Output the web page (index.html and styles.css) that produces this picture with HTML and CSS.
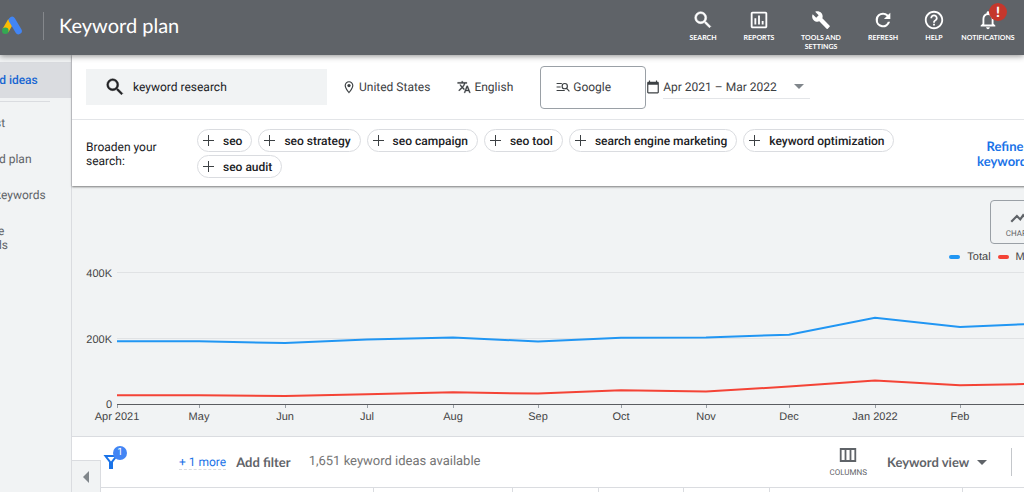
FILE: index.html
```html
<!DOCTYPE html>
<html lang="en">

<head>
    <meta charset="UTF-8">
    <meta name="viewport" content="width=device-width, initial-scale=1.0">
    <title>Keyword plan</title>

    <link rel="stylesheet" href="styles.css">
</head>

<body>

    <header class="topbar">
        <svg class="logo" width="24" height="20" viewBox="0 0 24 20">
            <path d="M5.5 14.5L11 5" stroke="#fbbc04" stroke-width="6.6" />
            <path d="M12 4l6.500 11" stroke="#4285f4" stroke-width="6.6" stroke-linecap="round" />
            <circle cx="5.3" cy="14.8" r="3.3" fill="#34a853" />
        </svg>
        <h1 class="title">Keyword plan</h1>

        <nav class="tools">
            <button class="tool">
                <svg width="22" height="22" viewBox="0 0 24 24"><path stroke="currentColor" stroke-width=".6" d="M15.5 14h-.79l-.28-.27A6.471 6.471 0 0 0 16 9.5 6.5 6.5 0 1 0 9.5 16c1.61 0 3.09-.59 4.23-1.57l.27.28v.79l5 4.99L20.49 19l-4.99-5zm-6 0C7.01 14 5 11.99 5 9.5S7.01 5 9.5 5 14 7.01 14 9.5 11.99 14 9.5 14z" /></svg>
                <span>SEARCH</span>
            </button>
            <button class="tool">
                <svg width="22" height="22" viewBox="0 0 24 24"><path d="M9 17H7v-7h2v7zm4 0h-2V7h2v10zm4 0h-2v-4h2v4zm2 2H5V5h14v14zm0-16H5c-1.100 0-2 .9-2 2v14c0 1.100.9 2 2 2h14c1.100 0 2-.9 2-2V5c0-1.100-.9-2-2-2z" /></svg>
                <span>REPORTS</span>
            </button>
            <button class="tool">
                <svg width="22" height="22" viewBox="0 0 24 24"><path transform="translate(1.500 1.500) scale(.88)" d="M22.700 19l-9.100-9.100c.9-2.300.4-5-1.500-6.900-2-2-5-2.400-7.400-1.300L9 6 6 9 1.600 4.700C.4 7.100.9 10.100 2.900 12.100c1.900 1.900 4.600 2.400 6.900 1.500l9.100 9.100c.4.4 1 .4 1.400 0l2.300-2.300c.5-.4.5-1.100.1-1.400z" /></svg>
                <span>TOOLS AND SETTINGS</span>
            </button>
            <button class="tool">
                <svg width="22" height="22" viewBox="0 0 24 24"><path d="M17.650 6.350A7.958 7.958 0 0 0 12 4a8 8 0 1 0 7.730 10h-2.480A5.600 5.600 0 1 1 12 6.400c1.500 0 2.900.6 4 1.600L13 11h7V4l-2.350 2.350z" /></svg>
                <span>REFRESH</span>
            </button>
            <button class="tool">
                <svg width="22" height="22" viewBox="0 0 24 24"><path d="M11 18h2v-2h-2v2zm1-16C6.480 2 2 6.480 2 12s4.480 10 10 10 10-4.480 10-10S17.520 2 12 2zm0 18c-4.410 0-8-3.590-8-8s3.590-8 8-8 8 3.590 8 8-3.590 8-8 8zm0-14c-2.210 0-4 1.790-4 4h2c0-1.100.9-2 2-2s2 .9 2 2c0 2-3 1.750-3 5h2c0-2.250 3-2.500 3-5 0-2.210-1.790-4-4-4z" /></svg>
                <span>HELP</span>
            </button>
            <button class="tool">
                <svg width="22" height="22" viewBox="0 0 24 24"><path d="M12 22c1.100 0 2-.9 2-2h-4c0 1.100.9 2 2 2zm6-6v-5c0-3.070-1.630-5.640-4.500-6.320V4c0-.83-.67-1.500-1.500-1.500s-1.500.67-1.500 1.500v.68C7.640 5.360 6 7.920 6 11v5l-2 2v1h16v-1l-2-2zm-2 1H8v-6c0-2.480 1.510-4.500 4-4.500s4 2.020 4 4.500v6z" /></svg>
                <span>NOTIFICATIONS</span>
                <b class="alert">!</b>
            </button>
        </nav>
    </header>

    <div class="page">
        <aside class="sidebar">
            <ul class="menu">
                <li class="active"><a href="#">rd ideas</a></li>
                <li class="line"></li>
                <li><a href="#">st</a></li>
                <li><a href="#">rd plan</a></li>
                <li><a href="#">keywords</a></li>
                <li><a href="#">&nbsp;e<br>ds</a></li>
            </ul>
        </aside>

        <main class="content">
            <section class="panel">
                <div class="filters">
                    <label class="search">
                        <svg width="22" height="22" viewBox="0 0 24 24"><path stroke="currentColor" stroke-width=".5" d="M15.5 14h-.79l-.28-.27A6.471 6.471 0 0 0 16 9.5 6.5 6.5 0 1 0 9.5 16c1.61 0 3.09-.59 4.23-1.57l.27.28v.79l5 4.99L20.49 19l-4.99-5zm-6 0C7.01 14 5 11.99 5 9.5S7.01 5 9.5 5 14 7.01 14 9.5 11.99 14 9.5 14z" /></svg>
                        <input type="text" value="keyword research" aria-label="Keywords">
                    </label>
                    <button class="filter place">
                        <svg width="14" height="14" viewBox="0 0 24 24"><path d="M12 2a7.500 7.500 0 0 0-7.500 7.500C4.500 15 12 23 12 23s7.500-8 7.500-13.500A7.500 7.500 0 0 0 12 2zm0 2c3 0 5.500 2.500 5.500 5.500 0 3-3 7.500-5.500 10.500-2.500-3-5.500-7.500-5.500-10.500C6.500 6.500 9 4 12 4z" /><circle cx="12" cy="9.500" r="2.800" /></svg>
                        United States
                    </button>
                    <button class="filter language">
                        <svg width="14" height="14" viewBox="0 0 24 24"><path d="M12.870 15.070l-2.540-2.510.03-.03A17.520 17.520 0 0 0 14.070 6H17V4h-7V2H8v2H1v2h11.170C11.500 7.920 10.440 9.750 9 11.350 8.070 10.320 7.300 9.190 6.690 8h-2c.73 1.630 1.730 3.170 2.980 4.560l-5.090 5.020L4 19l5-5 3.110 3.110.76-2.040zM18.500 10h-2L12 22h2l1.120-3h4.750L21 22h2l-4.500-12zm-2.620 7l1.620-4.330L19.120 17h-3.240z" stroke="currentColor" stroke-width=".5" /></svg>
                        English
                    </button>
                    <button class="filter network">
                        <svg width="14" height="14" viewBox="0 0 24 24"><path d="M1 6h9M1 12h7M1 18h14M18 14l5 5.500M19.500 10.500a4.500 4.500 0 1 1-9 0 4.500 4.500 0 1 1 9 0z" fill="none" stroke="currentColor" stroke-width="2" /></svg>
                        Google
                    </button>
                    <div class="filter date">
                        <svg width="14" height="14" viewBox="0 0 24 24"><path d="M20 3h-1V1h-2v2H7V1H5v2H4c-1.100 0-2 .9-2 2v16c0 1.100.9 2 2 2h16c1.100 0 2-.9 2-2V5c0-1.100-.9-2-2-2zm0 18H4V8h16v13z" /></svg>
                        <span class="dropdown">
                            <select aria-label="Date range">
                                <option>Apr 2021 – Mar 2022</option>
                            </select>
                        </span>
                    </div>
                </div>

                <div class="broaden">
                    <p>Broaden your search:</p>
                    <div class="chips">
                        <button class="chip">seo</button>
                        <button class="chip">seo strategy</button>
                        <button class="chip">seo campaign</button>
                        <button class="chip">seo tool</button>
                        <button class="chip">search engine marketing</button>
                        <button class="chip">keyword optimization</button>
                        <button class="chip">seo audit</button>
                    </div>
                    <a class="refine" href="#">Refine keywords</a>
                </div>
            </section>

            <section class="chart">
                <button class="chart-type">
                    <svg width="20" height="20" viewBox="0 0 24 24"><path d="M2.700 17.700l6.800-6.800 4 4 3.500-5 3 3 3-4" fill="none" stroke="currentColor" stroke-width="2.600" /></svg>
                    <span>CHART</span>
                </button>
                <div class="legend">
                    <span class="total">Total</span>
                    <span class="mobile">Mobile</span>
                </div>
                <svg class="plot" viewBox="0 0 992 173">
                    <path class="grid" d="M45 9.500h947M45 75.500h947" />
                    <path class="axis" d="M45 141.500h947" />
                    <path class="ticks" d="M45.500 142v3M127.500 142v3M213.500 142v3M295.500 142v3M381.500 142v3M466.500 142v3M549.500 142v3M634.500 142v3M717.500 142v3M803.500 142v3M888.500 142v3M966.500 142v3" />
                    <polyline class="line-total" points="45,78.300 127,78.300 213,80 295,76.500 381,74.500 466,78.500 549,74.700 634,74.400 717,71.700 803,54.700 888,64 966,60.500 992,60" />
                    <polyline class="line-mobile" points="45,132.300 127,132.300 213,133 295,131.200 381,129.300 466,130.600 549,127.300 634,128.600 717,123.500 803,117.400 888,122.300 966,120.800 992,120.500" />
                    <g class="values">
                        <text x="40" y="14">400K</text>
                        <text x="40" y="80">200K</text>
                        <text x="40" y="145">0</text>
                    </g>
                    <g class="months">
                        <text x="45" y="157">Apr 2021</text>
                        <text x="127" y="157">May</text>
                        <text x="213" y="157">Jun</text>
                        <text x="295" y="157">Jul</text>
                        <text x="381" y="157">Aug</text>
                        <text x="466" y="157">Sep</text>
                        <text x="549" y="157">Oct</text>
                        <text x="634" y="157">Nov</text>
                        <text x="717" y="157">Dec</text>
                        <text x="803" y="157">Jan 2022</text>
                        <text x="888" y="157">Feb</text>
                    </g>
                </svg>
            </section>

            <section class="results">
                <div class="toolbar">
                    <button class="funnel" aria-label="Filters">
                        <svg width="16" height="16" viewBox="0 0 16 16"><path d="M2.500 2h11L9 7.800V14H7V7.800z" fill="none" stroke="currentColor" stroke-width="2" /></svg>
                        <span class="count">1</span>
                    </button>
                    <a class="more" href="#">+ 1 more</a>
                    <button class="add">Add filter</button>
                    <span class="available">1,651 keyword ideas available</span>
                    <button class="columns">
                        <svg width="18" height="14" viewBox="0 0 18 14"><path d="M1.700 1h14.600v12H1.700zM6.500 1v12M11.500 1v12" fill="none" stroke="currentColor" stroke-width="1.800" /></svg>
                        <span>COLUMNS</span>
                    </button>
                    <span class="dropdown view">
                        <select aria-label="View">
                            <option>Keyword view</option>
                        </select>
                    </span>
                </div>
                <div class="table-head">
                    <span></span><span></span><span></span><span></span><span></span><span></span>
                </div>
                <button class="collapse" aria-label="Collapse menu"></button>
            </section>
        </main>
    </div>

</body>

</html>
```

FILE: styles.css
```css
* {
    box-sizing: border-box;
}

body {
    margin: 0;
    height: 100vh;
    display: flex;
    flex-direction: column;
    overflow: hidden;
    font-family: Roboto, "Liberation Sans", sans-serif;
    font-size: 12px;
    line-height: 14px;
    text-rendering: geometricPrecision;
    color: #3c4043;
    background-color: #f1f3f4;
}

button,
input,
select {
    font: inherit;
    text-rendering: inherit;
    color: inherit;
    background: none;
    border: none;
    padding: 0;
    margin: 0;
}

svg {
    flex: none;
    fill: currentColor;
}

a {
    color: inherit;
    text-decoration: none;
}

/* top bar */

.topbar {
    position: relative;
    z-index: 2;
    flex: none;
    height: 55px;
    display: flex;
    align-items: center;
    padding: 0 5px 3px 0;
    color: white;
    background-color: #5f6368;
    box-shadow: 0 1px 6px rgba(0, 0, 0, 0.45);
}

.logo {
    fill: none;
}

.title {
    margin: 0 auto 0 19px;
    padding-left: 15px;
    border-left: 1px solid #85888c;
    font-family: Lato, sans-serif;
    font-size: 20px;
    font-weight: 400;
    line-height: 28px;
}

.tools {
    align-self: stretch;
    display: grid;
    grid-template-columns: 56px 56px 68px 56px 46px 62px;
    padding-top: 9px;
}

.tool {
    position: relative;
    display: flex;
    flex-direction: column;
    align-items: center;
    justify-content: flex-start;
    gap: 3px;
    padding: 0 4px;
    font-family: Lato, sans-serif;
    font-size: 7px;
    font-weight: 700;
    line-height: 9px;
}

.alert {
    position: absolute;
    top: -6px;
    right: 12px;
    width: 18px;
    border-radius: 50%;
    background-color: #c5372c;
    font-size: 14px;
    line-height: 18px;
    text-align: center;
}

/* side menu */

.page {
    flex: 1;
    display: flex;
    min-height: 0;
}

.sidebar {
    flex: none;
    width: 72px;
    border-right: 1px solid #dadce0;
    color: #5f6368;
}

.menu {
    list-style: none;
    margin: 0 0 0 -5px;
    padding: 7px 0 0;
}

.menu li {
    padding: 11px 0;
}

.menu .active {
    font-weight: 500;
    color: #1967d2;
    background-color: #dadce0;
}

.menu .line {
    width: 55px;
    margin: 3px 0;
    padding: 0;
    border-top: 1px solid #dadce0;
}

/* content runs past the right edge of the window */

.content {
    flex: 1;
    display: flex;
    flex-direction: column;
    min-width: 0;
    margin-right: -40px;
}

.panel {
    position: relative;
    background-color: white;
    box-shadow: 0 1px 2px rgba(0, 0, 0, 0.5);
}

.filters {
    display: flex;
    align-items: center;
    height: 65px;
    padding-left: 14px;
    border-bottom: 1px solid #e3e5e8;
}

.search {
    display: flex;
    align-items: center;
    gap: 7px;
    width: 241px;
    height: 36px;
    padding-left: 18px;
    color: #202124;
    background-color: #f1f3f4;
}

.search input {
    flex: 1;
    min-width: 0;
}

.filter {
    display: flex;
    align-items: center;
    gap: 3px;
}

.place {
    margin-left: 15px;
}

.language {
    margin-left: 27px;
}

.network {
    width: 106px;
    height: 43px;
    margin-left: 27px;
    padding-left: 15px;
    border: 1px solid #9aa0a6;
    border-radius: 4px;
}

.dropdown {
    display: flex;
    align-items: center;
}

.dropdown::after {
    content: "";
    border: 5px solid transparent;
    border-top-color: #80868b;
    border-bottom: none;
    pointer-events: none;
}

select {
    appearance: none;
}

.date .dropdown {
    gap: 17px;
    padding: 4px 6px 4px 0;
    border-bottom: 1px solid #e3e5e8;
}

.broaden {
    display: flex;
    align-items: center;
    gap: 7px;
    padding: 9px 29px 8px 14px;
}

.broaden p {
    flex: none;
    width: 104px;
    margin: 0;
    padding-right: 28px;
    color: #202124;
}

.chips {
    flex: 1;
    display: flex;
    flex-wrap: wrap;
    gap: 3px 6px;
}

.chip {
    display: flex;
    align-items: center;
    gap: 9px;
    height: 23px;
    padding: 0 9px 0 5px;
    border: 1px solid #dadce0;
    border-radius: 12px;
    font-weight: 500;
    color: #202124;
}

.chip::before {
    content: "";
    width: 11px;
    height: 11px;
    background:
        linear-gradient(#3c4043, #3c4043) center / 11px 1px no-repeat,
        linear-gradient(#3c4043, #3c4043) center / 1px 11px no-repeat;
}

.refine {
    width: 60px;
    font-family: Lato, sans-serif;
    font-size: 13px;
    font-weight: 700;
    line-height: 15px;
    text-align: center;
    color: #1a73e8;
}

/* chart */

.chart {
    display: flex;
    flex-direction: column;
    align-items: flex-end;
    padding-top: 14px;
    border-bottom: 1px solid #dadce0;
    color: #5f6368;
}

.chart-type {
    display: flex;
    flex-direction: column;
    align-items: center;
    width: 57px;
    height: 44px;
    margin-right: 17px;
    padding-top: 6px;
    border: 1px solid #9aa0a6;
    border-radius: 4px;
    font-size: 8px;
}

.legend {
    display: flex;
    gap: 7px;
    height: 19px;
    padding: 7px 16px 0 0;
    font-family: "Liberation Sans", sans-serif;
    font-size: 11px;
    color: #444;
}

.legend span {
    display: flex;
    align-items: center;
    gap: 7px;
}

.legend span::before {
    content: "";
    width: 11px;
    height: 4px;
    border-radius: 2px;
    background-color: #2196f3;
}

.legend .mobile::before {
    background-color: #f44336;
}

.plot {
    display: block;
    width: 100%;
    font-family: "Liberation Sans", sans-serif;
    font-size: 11px;
    fill: #444;
}

.values {
    text-anchor: end;
}

.months {
    text-anchor: middle;
}

.grid {
    stroke: #e0e2e4;
}

.axis {
    stroke: #5a5c60;
}

.ticks {
    stroke: #9aa0a6;
}

.line-total,
.line-mobile {
    fill: none;
    stroke: #2196f3;
    stroke-width: 2;
}

.line-mobile {
    stroke: #f44336;
}

/* keyword table */

.results {
    position: relative;
    flex: 1;
    display: flex;
    flex-direction: column;
    background-color: white;
}

.toolbar {
    display: flex;
    align-items: center;
    height: 50px;
    padding-left: 31px;
    color: #5f6368;
}

.funnel {
    position: relative;
    display: flex;
    color: #1a73e8;
}

.count {
    position: absolute;
    top: -8px;
    left: 10px;
    width: 14px;
    border-radius: 50%;
    font-size: 10px;
    text-align: center;
    color: white;
    background-color: #4285f4;
}

.more {
    margin-left: 60px;
    border-bottom: 1px dashed #dadce0;
    color: #1a73e8;
}

.add {
    margin-left: 10px;
    font-family: Lato, sans-serif;
    font-size: 13px;
    font-weight: 700;
}

.available {
    margin: 0 auto 0 18px;
    font-size: 13px;
    color: #757575;
}

.columns {
    display: flex;
    flex-direction: column;
    align-items: center;
    gap: 6px;
    font-size: 8px;
    line-height: 9px;
}

.view {
    gap: 7px;
    height: 28px;
    margin: 0 52px 0 20px;
    padding-right: 24px;
    border-right: 1px solid #c4c7cb;
    font-family: Lato, sans-serif;
    font-size: 13px;
    font-weight: 700;
}

.view::after {
    border-top-color: #5f6368;
}

.table-head {
    flex: 1;
    display: grid;
    grid-template-columns: 302fr 139fr 86fr 85fr 86fr 193fr 101fr;
    border-top: 1px solid #dadce0;
}

.table-head span {
    border-right: 1px solid #dadce0;
}

.collapse {
    position: absolute;
    left: 0;
    bottom: 0;
    display: flex;
    align-items: center;
    justify-content: center;
    width: 29px;
    height: 32px;
    border: 1px solid #dadce0;
    border-width: 1px 1px 0 0;
    background-color: #f1f3f4;
}

.collapse::before {
    content: "";
    border: 6px solid transparent;
    border-right-color: #80868b;
    border-left: none;
}
```
